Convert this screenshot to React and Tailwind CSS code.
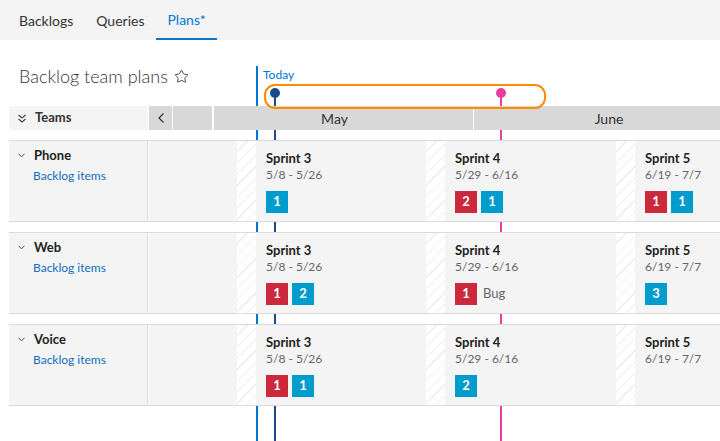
import { Star } from 'lucide-react';

const FONT = { fontFamily: '"Segoe UI", Lato, "Liberation Sans", sans-serif' };

const teams = [
  {
    name: 'Phone',
    sprints: [
      { name: 'Sprint 3', dates: '5/8 - 5/26', items: [['b', 1]] },
      { name: 'Sprint 4', dates: '5/29 - 6/16', items: [['r', 2], ['b', 1]] },
      { name: 'Sprint 5', dates: '6/19 - 7/7', items: [['r', 1], ['b', 1]] },
    ],
  },
  {
    name: 'Web',
    sprints: [
      { name: 'Sprint 3', dates: '5/8 - 5/26', items: [['r', 1], ['b', 2]] },
      { name: 'Sprint 4', dates: '5/29 - 6/16', items: [['r', 1]], label: 'Bug' },
      { name: 'Sprint 5', dates: '6/19 - 7/7', items: [['b', 3]] },
    ],
  },
  {
    name: 'Voice',
    sprints: [
      { name: 'Sprint 3', dates: '5/8 - 5/26', items: [['r', 1], ['b', 1]] },
      { name: 'Sprint 4', dates: '5/29 - 6/16', items: [['b', 2]] },
      { name: 'Sprint 5', dates: '6/19 - 7/7', items: [] },
    ],
  },
];

// hatched gap between sprints
const Hatch = () => (
  <div className="w-[19px] shrink-0 bg-[repeating-linear-gradient(135deg,#ffffff_0px,#ffffff_7px,#ececec_7px,#ececec_8px)]" />
);

const Badge = ({ kind, n }) => (
  <div
    className={
      'w-[22px] h-[22px] flex items-center justify-center text-white text-[13px] font-bold ' +
      (kind === 'r' ? 'bg-[#cc293d]' : 'bg-[#009ccc]')
    }
  >
    {n}
  </div>
);

const Sprint = ({ sprint, className }) => (
  <div className={'pl-[10px] pt-[8px] ' + className}>
    <div className="text-[13px] font-bold text-[#222] leading-[18px]">{sprint.name}</div>
    <div className="text-[12px] text-[#666] leading-[16px]">{sprint.dates}</div>
    <div className="flex items-center gap-[4px] mt-[8px]">
      {sprint.items.map(([k, n], i) => (
        <Badge key={i} kind={k} n={n} />
      ))}
      {sprint.label && <span className="ml-[2px] text-[13px] text-[#666]">{sprint.label}</span>}
    </div>
  </div>
);

const ChevronDown = ({ className }) => (
  <svg viewBox="0 0 8 5" className={className} fill="none" stroke="#444" strokeWidth="1.1">
    <path d="M0.5 0.5 L4 4 L7.5 0.5" />
  </svg>
);

export default function App() {
  return (
    <div className="relative w-[720px] h-[441px] overflow-hidden bg-white" style={FONT}>
      {/* tabs */}
      <div className="h-[40px] bg-[#f4f4f4] flex items-stretch pl-[19px] text-[14px] text-[#333]">
        <div className="flex items-center">Backlogs</div>
        <div className="flex items-center ml-[23px]">Queries</div>
        <div className="flex items-center ml-[12px] px-[11px] text-[#0078d4] border-b-2 border-[#0078d4]">Plans*</div>
      </div>

      {/* title */}
      <div className="h-[66px] flex items-center pl-[19px] pt-[6px]">
        <span className="text-[18px] font-light text-[#333]">Backlog team plans</span>
        <Star className="ml-[6px] w-[15px] h-[15px] text-[#333]" strokeWidth={1.4} />
      </div>

      {/* markers that sit under the rows */}
      <div className="absolute left-[256px] top-[66px] w-[2px] h-[380px] bg-[#0078d4]" />
      <div className="absolute left-[274px] top-[93px] w-[2px] h-[350px] bg-[#1c4a8e]" />
      <div className="absolute left-[500px] top-[93px] w-[2px] h-[350px] bg-[#e63ea0]" />
      <div className="absolute left-[263px] top-[66px] text-[12px] text-[#0078d4]">Today</div>

      {/* header */}
      <div className="relative z-10 ml-[9px] h-[24px] flex text-[#333]">
        <div className="w-[139px] bg-[#f4f4f4] flex items-center pl-[9px]">
          <svg viewBox="0 0 8 9" className="w-[8px] h-[9px]" fill="none" stroke="#444" strokeWidth="1.1">
            <path d="M0.5 1 L4 4 L7.5 1" />
            <path d="M0.5 5 L4 8 L7.5 5" />
          </svg>
          <span className="ml-[9px] text-[13px] font-bold">Teams</span>
        </div>
        <div className="ml-[1px] w-[23px] bg-[#d8d8d8] flex items-center justify-center">
          <svg viewBox="0 0 6 10" className="w-[6px] h-[10px]" fill="none" stroke="#333" strokeWidth="1.2">
            <path d="M5.5 0.5 L1 5 L5.5 9.5" />
          </svg>
        </div>
        <div className="ml-[1px] w-[39px] bg-[#d8d8d8]" />
        <div className="ml-[2px] w-[259px] bg-[#d8d8d8] flex items-center justify-center pr-[18px] text-[14px]">May</div>
        <div className="ml-[1px] flex-1 bg-[#d8d8d8] flex items-center justify-center pl-[24px] text-[14px]">June</div>
      </div>

      {/* timeline markers drawn over the header */}
      <div className="absolute z-20 left-[264px] top-[84px] w-[282px] h-[25px] rounded-[11px] border-2 border-[#ff8c00]" />
      <div className="absolute z-20 left-[270px] top-[88px] w-[10px] h-[10px] rounded-full bg-[#1c4a8e]" />
      <div className="absolute z-20 left-[496px] top-[88px] w-[10px] h-[10px] rounded-full bg-[#e63ea0]" />
      <div className="absolute z-20 left-[274px] top-[97px] w-[2px] h-[9px] bg-[#1c4a8e]" />
      <div className="absolute z-20 left-[500px] top-[97px] w-[2px] h-[9px] bg-[#e63ea0]" />

      {/* team rows */}
      <div className="relative z-10 ml-[9px] mt-[10px] flex flex-col gap-[10px]">
        {teams.map((team) => (
          <div key={team.name} className="h-[82px] flex border-y border-[#dadada] bg-white">
            <div className="w-[139px] bg-[#f4f4f4] border-r border-[#dadada] pl-[9px] pt-[5px]">
              <div className="flex items-center">
                <ChevronDown className="w-[7px] h-[5px]" />
                <span className="ml-[9px] text-[13px] font-bold text-[#222] leading-[18px]">{team.name}</span>
              </div>
              <div className="ml-[15px] mt-[3px] text-[12px] text-[#106ebe]">Backlog items</div>
            </div>
            <div className="ml-[1px] flex-1 flex bg-[#f4f4f4]">
              <div className="w-[88px] shrink-0" />
              <Hatch />
              <Sprint sprint={team.sprints[0]} className="w-[170px] shrink-0" />
              <Hatch />
              <Sprint sprint={team.sprints[1]} className="w-[171px] shrink-0" />
              <Hatch />
              <Sprint sprint={team.sprints[2]} className="flex-1" />
            </div>
          </div>
        ))}
      </div>
    </div>
  );
}
